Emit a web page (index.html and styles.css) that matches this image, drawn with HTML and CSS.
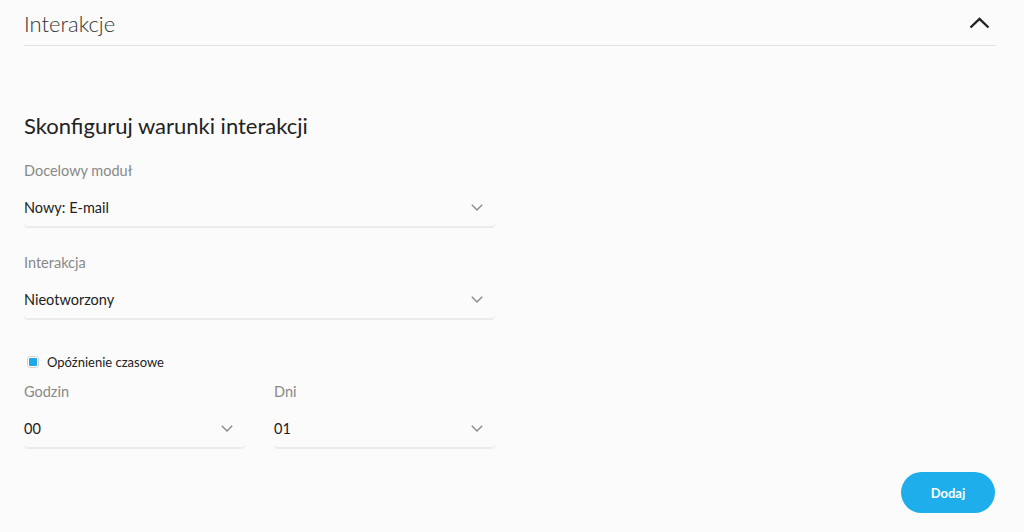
FILE: index.html
```html
<!DOCTYPE html>
<html>
<head>
	<title>Interakcje</title>
	<link rel="stylesheet" href="styles.css">
</head>
<body>
	<div class="panel">
		<div class="panel-head">
			<span class="panel-title">Interakcje</span>
			<svg class="toggle" width="21" height="12" viewBox="0 0 21 12"><path d="M1.5 10.5 L10.5 1.8 L19.5 10.5" fill="none" stroke="#222" stroke-width="2.4"/></svg>
		</div>

		<h2 class="section-title">Skonfiguruj warunki interakcji</h2>

		<div class="form">
			<div class="field">
				<div class="label">Docelowy moduł</div>
				<div class="select">
					<span>Nowy: E-mail</span>
					<svg class="caret" width="12" height="7" viewBox="0 0 12 7"><path d="M0.8 0.8 L6 6 L11.2 0.8" fill="none" stroke="#8a8a8a" stroke-width="1.4"/></svg>
				</div>
			</div>

			<div class="field">
				<div class="label">Interakcja</div>
				<div class="select">
					<span>Nieotworzony</span>
					<svg class="caret" width="12" height="7" viewBox="0 0 12 7"><path d="M0.8 0.8 L6 6 L11.2 0.8" fill="none" stroke="#8a8a8a" stroke-width="1.4"/></svg>
				</div>
			</div>

			<label class="check">
				<span class="box"><span class="tick"></span></span>
				Opóźnienie czasowe
			</label>

			<div class="row">
				<div class="field">
					<div class="label">Godzin</div>
					<div class="select">
						<span>00</span>
						<svg class="caret" width="12" height="7" viewBox="0 0 12 7"><path d="M0.8 0.8 L6 6 L11.2 0.8" fill="none" stroke="#8a8a8a" stroke-width="1.4"/></svg>
					</div>
				</div>
				<div class="field">
					<div class="label">Dni</div>
					<div class="select">
						<span>01</span>
						<svg class="caret" width="12" height="7" viewBox="0 0 12 7"><path d="M0.8 0.8 L6 6 L11.2 0.8" fill="none" stroke="#8a8a8a" stroke-width="1.4"/></svg>
					</div>
				</div>
			</div>
		</div>

		<div class="actions">
			<button class="btn">Dodaj</button>
		</div>
	</div>
</body>
</html>
```

FILE: styles.css
```css
body{
	margin: 0;
	padding: 0;
	background: #fbfbfb;
	font-family: Lato, "Open Sans", sans-serif;
	color: #222;
}
.panel{
	padding: 0 28px 0 24px;
}
.panel-head{
	display: flex;
	justify-content: space-between;
	align-items: center;
	height: 45px;
	border-bottom: 1px solid #e2e2e2;
	padding-right: 6px;
}
.panel-title{
	font-size: 22px;
	font-weight: 300;
	color: #333;
	margin-top: 1px;
}
.toggle{
	margin-top: 0;
}
.section-title{
	margin: 67px 0 0;
	font-size: 22px;
	font-weight: 400;
	line-height: 26px;
	color: #222;
}
.form{
	width: 471px;
}
.field{
	margin-top: 27px;
}
.field:first-child{
	margin-top: 23px;
}
.label{
	font-size: 14.5px;
	line-height: 17px;
	color: #888;
}
.select{
	display: flex;
	justify-content: space-between;
	align-items: center;
	height: 37px;
	margin-top: 10px;
	font-size: 14.5px;
	color: #222;
	border-radius: 4px;
	box-shadow: 0 1px 1px rgba(0,0,0,0.07);
	border-bottom: 1px solid #ebebeb;
}
.caret{
	margin-right: 12px;
}
.check{
	display: flex;
	align-items: center;
	height: 14px;
	margin-top: 36px;
	font-size: 13px;
	color: #222;
}
.box{
	box-sizing: border-box;
	display: inline-flex;
	align-items: center;
	justify-content: center;
	width: 12px;
	height: 12px;
	margin: 0 8px 0 3px;
	border: 1px solid #d5d5d5;
	border-radius: 3px;
	background: #fff;
}
.tick{
	width: 8px;
	height: 8px;
	border-radius: 1px;
	background: #1ea8e8;
}
.row{
	display: flex;
	gap: 29px;
}
.row .field{
	flex: 1;
	margin-top: 14px;
}
.actions{
	display: flex;
	justify-content: flex-end;
	margin-top: 24px;
}
.btn{
	width: 94px;
	height: 41px;
	border: none;
	border-radius: 21px;
	background: #1eaeeb;
	color: #fff;
	font-family: Lato, sans-serif;
	font-size: 13px;
	font-weight: 700;
	margin-right: 1px;
}
```
